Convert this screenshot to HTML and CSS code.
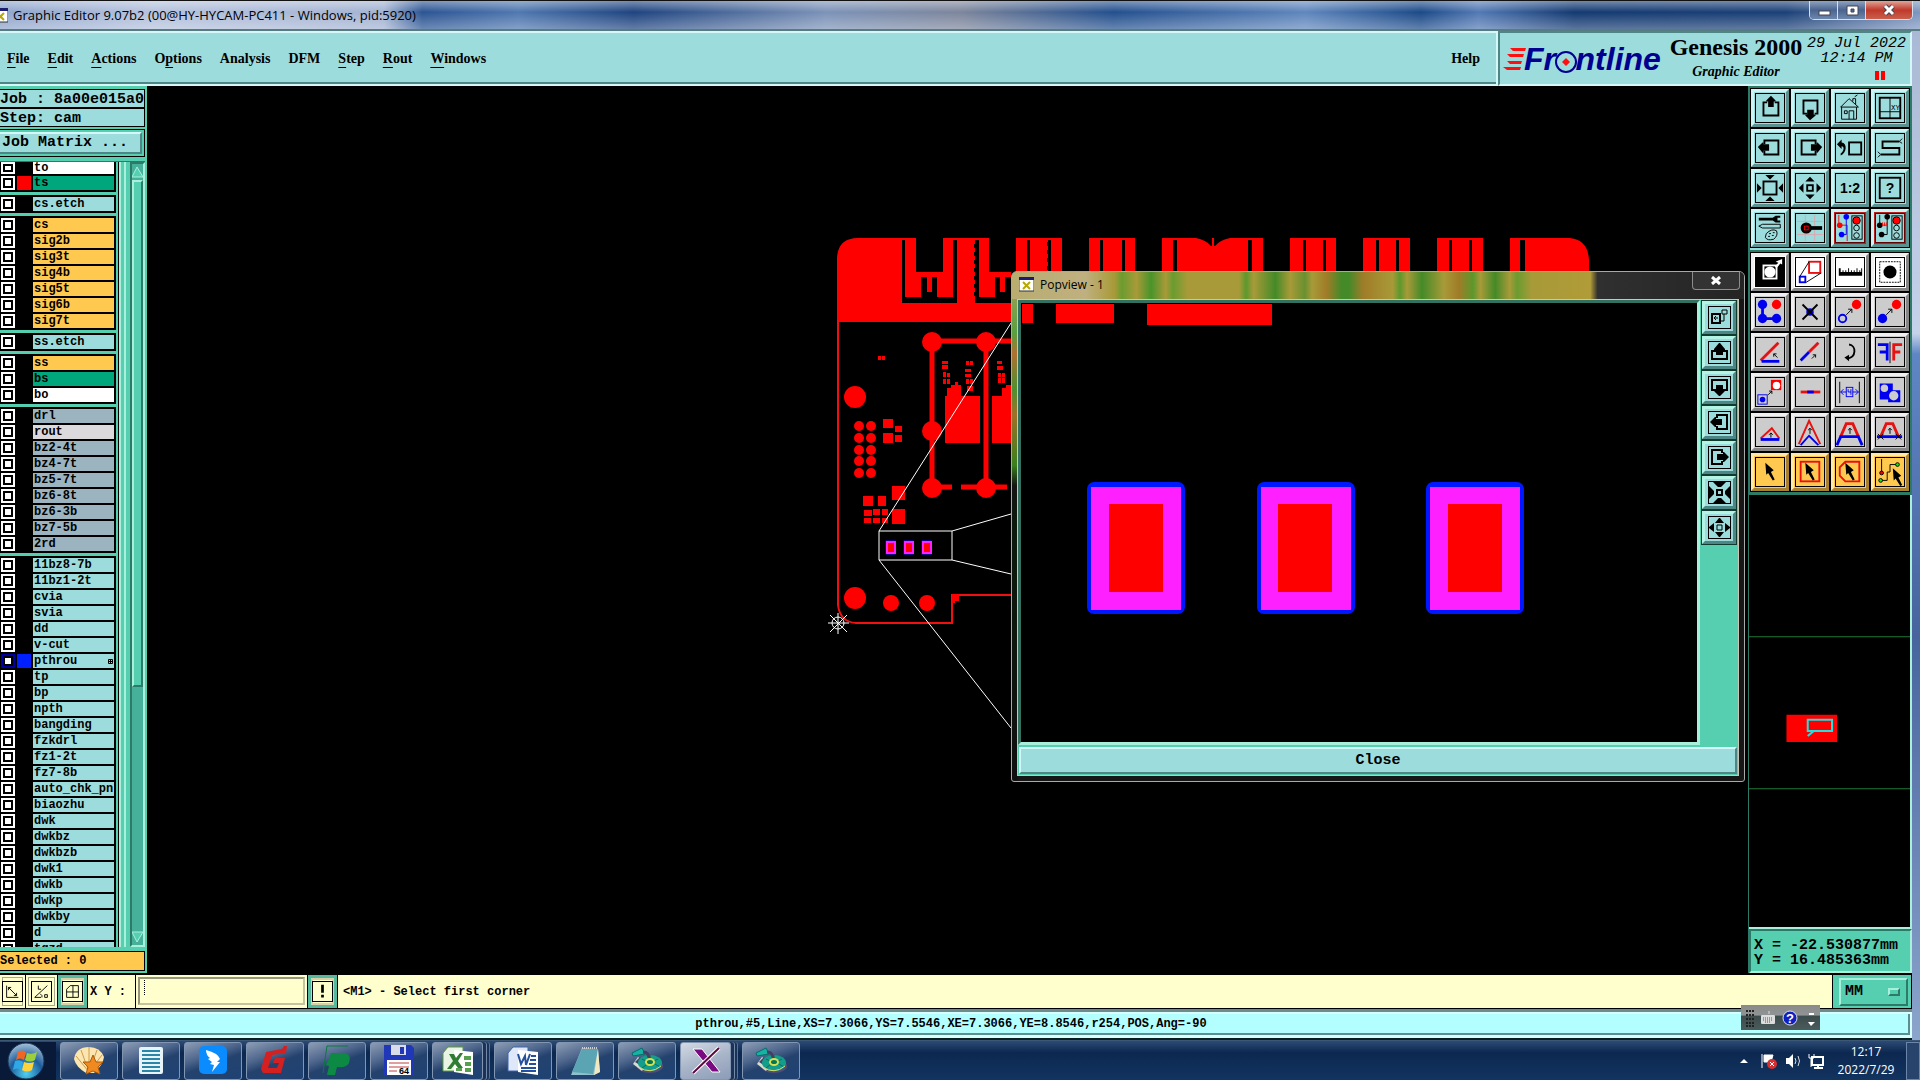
FILE: index.html
```html
<!DOCTYPE html>
<html lang="en">
  <head>
    <meta charset="UTF-8" />
    <meta name="viewport" content="width=device-width, initial-scale=1.0" />
    <title>Graphic Editor 9.07b2</title>
    <link rel="stylesheet" href="styles.css">
  </head>
  <body>
    <!-- shared icons -->
    <svg class="defs">
      <symbol id="up" viewBox="0 0 30 30"><path class="k2" d="M12 9H8V23H24V9H20"/><path class="kf" d="M16 2L21 7V8H19V14H13V8H11V7Z"/></symbol>
      <symbol id="down" viewBox="0 0 30 30"><path class="k2" d="M12 21H8V7H23V21H20"/><path class="kf" d="M15 28L10 23V22H12V17H19V22H21V23Z"/></symbol>
      <symbol id="left" viewBox="0 0 30 30"><path class="k2" d="M9 11V7H24V22H9V18"/><path class="kf" d="M2 14L7 9H8V11H14V18H8V20H7Z"/></symbol>
      <symbol id="right" viewBox="0 0 30 30"><path class="k2" d="M21 11V7H6V22H21V18"/><path class="kf" d="M28 14L23 9H22V11H16V18H22V20H23Z"/></symbol>
      <symbol id="zoomin" viewBox="0 0 30 30"><rect class="k2" x="8" y="8" width="14" height="14"/><path class="kf" d="M10 1H20L15 6ZM10 29H20L15 24ZM1 10V20L6 15ZM29 10V20L24 15Z"/></symbol>
      <symbol id="zoomout" viewBox="0 0 30 30"><rect class="k2" x="12" y="12" width="6" height="6"/><path class="kf" d="M10 8H20L15 3ZM10 22H20L15 27ZM8 10V20L3 15ZM22 10V20L27 15Z"/></symbol>
      <symbol id="cursor" viewBox="0 0 30 30"><path class="kf" d="M10 5L19 13L16 15L20 23L18 24L13 16L11 18Z"/></symbol>
      <symbol id="light" viewBox="0 0 30 30"><rect class="k" x="17" y="2" width="11" height="25"/><circle class="rf k" cx="22" cy="7" r="4"/><circle class="k" cx="22" cy="15" r="3"/><circle class="k" cx="22" cy="23" r="3"/></symbol>
      <symbol id="xwin" viewBox="0 0 15 15"><rect x="0" y="1" width="15" height="13" fill="#fff" stroke="#333"/><rect x="0" y="0" width="15" height="3" fill="#1d1d70"/><path d="M4 5L11 12M11 5L4 12" stroke="#b8a800" stroke-width="2"/></symbol>
      <symbol id="disc" viewBox="0 0 34 28"><ellipse cx="20" cy="19" rx="13" ry="7" fill="#554c78"/><path d="M3 17L8 10L17 16L12 24Z" fill="#d8dcd0"/><path d="M5 15L10 10L18 16L13 20Z" fill="#3f4262"/><ellipse cx="20" cy="16" rx="12" ry="8" fill="#159d8c"/><path d="M20 8V12M12 12L16 14M28 12L24 14M30 20L25 17M12 21L16 18" stroke="#0b6a68"/><path d="M2 6L12 1L15 7L3 9Z" fill="#14b3a4" stroke="#0b6a68"/><path d="M13 5C19 5 18 9 20 13" fill="none" stroke="#3f4262" stroke-width="3"/><ellipse cx="20" cy="15" rx="5" ry="4" fill="#d8e050"/><ellipse cx="20" cy="15" rx="3" ry="2" fill="#075"/><path d="M9 20Q20 28 31 19" fill="none" stroke="#dce064"/></symbol>
    </svg>

    <header class="titlebar">
      <svg class="appicon"><use href="#xwin"/></svg>
      <span class="title">Graphic Editor 9.07b2 (00@HY-HYCAM-PC411 - Windows, pid:5920)</span>
      <div class="winbuttons">
        <button aria-label="Minimize"><svg viewBox="0 0 28 18"><rect x="9" y="10" width="11" height="4" fill="#fff" stroke="#445"/></svg></button>
        <button aria-label="Restore"><svg viewBox="0 0 28 18"><path d="M9 5H20V14H9ZM13 8H16V11H13Z" fill="#fff" fill-rule="evenodd" stroke="#445"/></svg></button>
        <button class="quit" aria-label="Close"><svg viewBox="0 0 28 18"><path d="M10 5L18 13M18 5L10 13" stroke="#445" stroke-width="5"/><path d="M10 5L18 13M18 5L10 13" stroke="#fff" stroke-width="3"/></svg></button>
      </div>
    </header>

    <div class="app">
      <div class="top">
        <nav class="menu">
          <a href="#"><u>F</u>ile</a>
          <a href="#"><u>E</u>dit</a>
          <a href="#"><u>A</u>ctions</a>
          <a href="#">O<u>p</u>tions</a>
          <a href="#">Analysis</a>
          <a href="#">DFM</a>
          <a href="#"><u>S</u>tep</a>
          <a href="#"><u>R</u>out</a>
          <a href="#"><u>W</u>indows</a>
          <a href="#" class="help">Help</a>
        </nav>
        <div class="brand">
          <svg class="logo" viewBox="0 0 162 34">
            <path d="M7 4H23L22 7H10ZM4 10H21L20 13H7ZM4 17H19L18 20H7ZM0 23H18L17 26H4Z" fill="#ff1010"/>
            <text x="21" y="26">Frontline</text>
            <circle cx="63" cy="18" r="10" class="eye"/>
            <path d="M63 14L67 18L63 22L59 18Z" fill="#ff1010"/>
          </svg>
          <div class="product">
            <h1>Genesis 2000</h1>
            <p>Graphic Editor</p>
          </div>
          <div class="clock">
            <p>29 Jul 2022</p>
            <p>12:14 PM</p>
            <div class="pause"><i></i><i></i></div>
          </div>
        </div>
      </div>

      <main class="main">
        <aside class="side">
          <div class="info">Job : 8a00e015a0</div>
          <div class="info">Step: cam</div>
          <div class="matrixbox"><button class="matrix">Job Matrix ...</button></div>
          <div class="scroller">
            <div class="layers">
              <div class="group">
                <label class="layer white cut"><input type="checkbox"><i></i><span>to</span></label>
                <label class="layer green"><input type="checkbox"><i class="red"></i><span>ts</span></label>
              </div>
              <div class="group">
                <label class="layer"><input type="checkbox"><i></i><span>cs.etch</span></label>
              </div>
              <div class="group">
                <label class="layer sig"><input type="checkbox"><i></i><span>cs</span></label>
                <label class="layer sig"><input type="checkbox"><i></i><span>sig2b</span></label>
                <label class="layer sig"><input type="checkbox"><i></i><span>sig3t</span></label>
                <label class="layer sig"><input type="checkbox"><i></i><span>sig4b</span></label>
                <label class="layer sig"><input type="checkbox"><i></i><span>sig5t</span></label>
                <label class="layer sig"><input type="checkbox"><i></i><span>sig6b</span></label>
                <label class="layer sig"><input type="checkbox"><i></i><span>sig7t</span></label>
              </div>
              <div class="group">
                <label class="layer"><input type="checkbox"><i></i><span>ss.etch</span></label>
              </div>
              <div class="group">
                <label class="layer sig"><input type="checkbox"><i></i><span>ss</span></label>
                <label class="layer green"><input type="checkbox"><i></i><span>bs</span></label>
                <label class="layer white"><input type="checkbox"><i></i><span>bo</span></label>
              </div>
              <div class="group">
                <label class="layer drill"><input type="checkbox"><i></i><span>drl</span></label>
                <label class="layer rout"><input type="checkbox"><i></i><span>rout</span></label>
                <label class="layer drill"><input type="checkbox"><i></i><span>bz2-4t</span></label>
                <label class="layer drill"><input type="checkbox"><i></i><span>bz4-7t</span></label>
                <label class="layer drill"><input type="checkbox"><i></i><span>bz5-7t</span></label>
                <label class="layer drill"><input type="checkbox"><i></i><span>bz6-8t</span></label>
                <label class="layer drill"><input type="checkbox"><i></i><span>bz6-3b</span></label>
                <label class="layer drill"><input type="checkbox"><i></i><span>bz7-5b</span></label>
                <label class="layer drill"><input type="checkbox"><i></i><span>2rd</span></label>
              </div>
              <div class="group">
                <label class="layer"><input type="checkbox"><i></i><span>11bz8-7b</span></label>
                <label class="layer"><input type="checkbox"><i></i><span>11bz1-2t</span></label>
                <label class="layer"><input type="checkbox"><i></i><span>cvia</span></label>
                <label class="layer"><input type="checkbox"><i></i><span>svia</span></label>
                <label class="layer"><input type="checkbox"><i></i><span>dd</span></label>
                <label class="layer"><input type="checkbox"><i></i><span>v-cut</span></label>
                <label class="layer work"><input type="checkbox"><i class="blue"></i><span>pthrou<svg viewBox="0 0 5 5"><path class="k" d="M.5 .5H4.5V4.5H.5ZM2.5 0V5M0 2.5H5"/></svg></span></label>
                <label class="layer"><input type="checkbox"><i></i><span>tp</span></label>
                <label class="layer"><input type="checkbox"><i></i><span>bp</span></label>
                <label class="layer"><input type="checkbox"><i></i><span>npth</span></label>
                <label class="layer"><input type="checkbox"><i></i><span>bangding</span></label>
                <label class="layer"><input type="checkbox"><i></i><span>fzkdrl</span></label>
                <label class="layer"><input type="checkbox"><i></i><span>fz1-2t</span></label>
                <label class="layer"><input type="checkbox"><i></i><span>fz7-8b</span></label>
                <label class="layer"><input type="checkbox"><i></i><span>auto_chk_pnl</span></label>
                <label class="layer"><input type="checkbox"><i></i><span>biaozhu</span></label>
                <label class="layer"><input type="checkbox"><i></i><span>dwk</span></label>
                <label class="layer"><input type="checkbox"><i></i><span>dwkbz</span></label>
                <label class="layer"><input type="checkbox"><i></i><span>dwkbzb</span></label>
                <label class="layer"><input type="checkbox"><i></i><span>dwk1</span></label>
                <label class="layer"><input type="checkbox"><i></i><span>dwkb</span></label>
                <label class="layer"><input type="checkbox"><i></i><span>dwkp</span></label>
                <label class="layer"><input type="checkbox"><i></i><span>dwkby</span></label>
                <label class="layer"><input type="checkbox"><i></i><span>d</span></label>
                <label class="layer"><input type="checkbox"><i></i><span>tgzd</span></label>
              </div>
            </div>
            <div class="ridge"></div>
            <div class="scrollbar">
              <svg viewBox="0 0 11 12"><path d="M0 11L5 1L11 11Z" fill="#56cfb0" stroke="#a8f0dc"/></svg>
              <div class="thumb"></div>
              <div class="trough"></div>
              <svg viewBox="0 0 11 12"><path d="M0 1L5 11L11 1Z" fill="#56cfb0" stroke="#a8f0dc"/></svg>
            </div>
          </div>
          <div class="selected">Selected : 0</div>
        </aside>

        <section class="canvas">
          <svg class="board" viewBox="147 86 1601 887" preserveAspectRatio="xMinYMin slice">
            <!-- board edge and connector fingers -->
            <path class="cu" d="M837 322V258Q838 238 858 238H1011V322ZM1016 238H1062V280H1016ZM1089 238H1135V280H1089ZM1162 238H1196Q1206 240 1211 246H1215Q1220 240 1230 238H1263V280H1162ZM1290 238H1336V280H1290ZM1363 238H1410V280H1363ZM1437 238H1483V280H1437ZM1510 238H1570Q1588 240 1589 260V280H1510Z"/>
            <path class="cu" d="M1212 238H1214V250H1212Z"/>
            <path d="M902 240H905V297H921V276H937V297H953V240H957V303H902ZM916 238H943V272H939V276H920V272H916ZM975 240H979V297H995V276H1011V303H975ZM989 238H1016V276H993V272H989ZM1027 240H1030V280H1027ZM1048 240H1051V280H1048ZM1100 240H1103V280H1100ZM1122 240H1125V280H1122ZM1173 240H1177V280H1173ZM1248 240H1252V280H1248ZM1303 240H1306V280H1303ZM1323 240H1326V280H1323ZM1376 240H1379V280H1376ZM1396 240H1399V280H1396ZM1449 240H1452V280H1449ZM1469 240H1472V280H1469ZM1520 240H1525V280H1520Z"/>
            <path class="cu" d="M920 272H939V277H920ZM927 276H932V292H927ZM993 272H1011V277H993ZM1000 276H1005V292H1000Z"/>
            <path d="M1048 242V280M1123 242V280M1176 242V280M1305 242V280M1378 242V280M1451 242V280M975 244V298" stroke="#000" stroke-width="2" stroke-dasharray="4 4"/>
            <path d="M838 320V605Q840 622 856 623H952V595H1011" fill="none" stroke="#f01010" stroke-width="2"/>
            <path class="cu" d="M952 594H959V601H955V603H952Z"/>
            <!-- rails -->
            <path d="M932 341V488M986 341V488M932 341H1011M932 487H952M961 487H1007" fill="none" stroke="#f00" stroke-width="5"/>
            <g class="cu">
              <circle cx="932" cy="342" r="10"/><circle cx="986" cy="342" r="10"/><circle cx="932" cy="431" r="10"/>
              <circle cx="932" cy="488" r="10"/><circle cx="986" cy="488" r="10"/>
              <circle cx="855" cy="397" r="11"/><circle cx="855" cy="598" r="11"/><circle cx="891" cy="603" r="8"/><circle cx="927" cy="603" r="8"/>
              <circle cx="859" cy="426" r="5"/><circle cx="871" cy="426" r="5"/><circle cx="859" cy="438" r="5"/><circle cx="871" cy="438" r="5"/>
              <circle cx="859" cy="450" r="5"/><circle cx="871" cy="450" r="5"/><circle cx="859" cy="461" r="5"/><circle cx="871" cy="461" r="5"/>
              <circle cx="859" cy="473" r="5"/><circle cx="871" cy="473" r="5"/>
              <path d="M878 356H881V360H878ZM882 356H885V360H882ZM883 419H893V428H883ZM883 433H893V443H883ZM895 426H902V432H895ZM895 435H902V442H895ZM892 486H905V500H892ZM892 509H905V524H892ZM863 496H873V506H863ZM878 496H886V506H878ZM864 510H872V516H864ZM873 509H880V515H873ZM882 509H888V515H882ZM864 518H871V523H864ZM873 518H880V523H873ZM882 518H888V523H882Z"/>
              <path d="M942 361H948V364H942ZM942 365H948V369H942ZM943 372H946V377H943ZM947 373H950V377H947ZM943 379H946V384H943ZM947 379H950V384H947ZM966 361H969V365H966ZM970 361H973V365H970ZM965 369H971V372H965ZM965 374H971V377H965ZM966 379H969V384H966ZM970 379H973V384H970ZM967 386H973V391H967ZM997 361H1002V364H997ZM997 366H1003V370H997ZM998 373H1001V377H998ZM1002 373H1005V377H1002ZM998 378H1001V383H998ZM1002 378H1005V383H1002Z"/>
              <path d="M945 443V396H947V388H951V385H955V382H958V385H961V396H980V443ZM992 443V396H1002V388H1006V385H1011V443Z"/>
            </g>
            <!-- zoomed area and its leader lines -->
            <rect x="879" y="531" width="73" height="29" fill="#000"/>
            <g stroke="#20f" fill="#f00">
              <rect x="886" y="541" width="9" height="13"/><rect x="904" y="541" width="9" height="13"/><rect x="922" y="541" width="9" height="13"/>
            </g>
            <g stroke="#f2f" stroke-width="2" fill="#f00">
              <rect x="887" y="542" width="8" height="11"/><rect x="905" y="542" width="8" height="11"/><rect x="923" y="542" width="8" height="11"/>
            </g>
            <path class="w" d="M879 531H952V560H879ZM879 531L1011 323M952 531L1011 514M952 560L1011 574M879 560L1011 728"/>
            <g class="w"><circle cx="838" cy="623" r="6"/><path d="M828 623H849M838 613V634M830 615L847 632M847 615L830 632"/></g>
          </svg>

          <div class="popview">
            <div class="poptitle">
              <svg class="appicon"><use href="#xwin"/></svg>
              <span>Popview - 1</span>
              <button aria-label="Close popview"><svg viewBox="0 0 10 9"><path d="M1 1L9 8M9 1L1 8" stroke="#fff" stroke-width="3"/></svg></button>
            </div>
            <div class="popbody">
              <div class="poprow">
                <svg class="view" viewBox="1021 303 677 439" preserveAspectRatio="xMinYMin slice">
                  <path class="cu" d="M1022 304H1033V323H1022ZM1056 304H1114V323H1056ZM1147 304H1272V325H1147Z"/>
                  <g fill="#0018ff"><rect x="1087" y="482" width="98" height="132" rx="7"/><rect x="1257" y="482" width="98" height="132" rx="7"/><rect x="1426" y="482" width="98" height="132" rx="7"/></g>
                  <g fill="#ff20ff"><rect x="1091" y="487" width="90" height="123"/><rect x="1261" y="487" width="90" height="123"/><rect x="1430" y="487" width="90" height="123"/></g>
                  <g class="cu"><rect x="1109" y="504" width="54" height="88"/><rect x="1278" y="504" width="54" height="88"/><rect x="1448" y="504" width="54" height="88"/></g>
                </svg>
                <div class="poptools">
                  <button aria-label="Detach"><svg viewBox="0 0 21 21"><path class="k2" d="M3 7H11V16H3Z"/><path class="k" d="M12 14H15V7M13 3H18V7H13ZM9 11H5M7 9L5 11L7 13"/></svg></button>
                  <button aria-label="Pan up"><svg viewBox="0 0 21 21"><path class="k2" d="M7 9H3V17H18V9H14"/><path class="kf" d="M10 1H11L16 7V8H14V13H7V8H5V7Z"/></svg></button>
                  <button aria-label="Pan down"><svg viewBox="0 0 21 21"><path class="k2" d="M7 13H3V3H18V13H14"/><path class="kf" d="M10 19H11L16 14V13H14V8H7V13H5V14Z"/></svg></button>
                  <button aria-label="Pan left"><svg viewBox="0 0 21 21"><path class="k2" d="M8 6V3H18V17H8V14"/><path class="kf" d="M1 10L6 5H7V7H13V13H7V15H6Z"/></svg></button>
                  <button aria-label="Pan right"><svg viewBox="0 0 21 21"><path class="k2" d="M13 6V3H3V17H13V14"/><path class="kf" d="M20 10L15 5H14V7H8V13H14V15H15Z"/></svg></button>
                  <button aria-label="Zoom in"><svg viewBox="0 0 21 21"><path class="k2" d="M8 8H13V13H8Z"/><path class="kf" d="M4 0H17L12 5H9ZM4 21H17L12 16H9ZM0 4V17L5 12V9ZM21 4V17L16 12V9Z"/></svg></button>
                  <button aria-label="Zoom out"><svg viewBox="0 0 21 21"><path class="k" d="M8 8H13V13H8Z"/><path class="kf" d="M6 6H15L11 1H10ZM6 15H15L11 20H10ZM5 6V15L0 11V10ZM16 6V15L21 11V10Z"/></svg></button>
                </div>
              </div>
              <div class="closebar"><button>Close</button></div>
            </div>
          </div>
        </section>

        <aside class="tools">
          <div class="grid teal">
            <button aria-label="Up"><svg><use href="#up"/></svg></button>
            <button aria-label="Down"><svg><use href="#down"/></svg></button>
            <button aria-label="Home"><svg viewBox="0 0 30 30"><path class="k" d="M5 14L14 5L24 14ZM6 14V27H22V14M14 27V18H19V27M9 18H12V21H9ZM18 8V5H21V11M20 3L23 1"/></svg></button>
            <button aria-label="Coordinates"><svg viewBox="0 0 30 30"><rect class="k2" x="4" y="4" width="22" height="22"/><path class="k" d="M15 4V26M4 19H26"/><text class="tiny" x="16" y="17">XY</text></svg></button>

            <button aria-label="Left"><svg><use href="#left"/></svg></button>
            <button aria-label="Right"><svg><use href="#right"/></svg></button>
            <button aria-label="Previous"><svg viewBox="0 0 30 30"><rect class="k2" x="14" y="9" width="13" height="13"/><path class="kf" d="M1 11L6 6V9C12 9 12 20 5 23V21C9 18 9 13 6 13V16Z"/></svg></button>
            <button aria-label="Serpentine"><svg viewBox="0 0 30 30"><path class="k2" d="M25 8H7V15H25V22H5"/><path class="k" d="M28 5L25 8L28 10M2 19L5 22L2 25"/></svg></button>

            <button aria-label="Zoom in"><svg><use href="#zoomin"/></svg></button>
            <button aria-label="Zoom out"><svg><use href="#zoomout"/></svg></button>
            <button aria-label="Scale"><svg viewBox="0 0 30 30"><text class="lbl" x="15" y="20">1:2</text></svg></button>
            <button aria-label="Help"><svg viewBox="0 0 30 30"><rect class="k2" x="4" y="4" width="22" height="22"/><text class="lbl" x="15" y="20">?</text></svg></button>

            <button aria-label="Setup"><svg viewBox="0 0 30 30"><path class="kf" d="M3 4H18L21 2H26V4H23V7H26V9H21L18 7H3Z"/><path class="k" d="M3 13L7 11H26V15H7ZM11 21Q17 15 22 18Q24 23 19 27Q12 29 10 25ZM14 21H16M18 20H20M13 24H15M17 23H19"/></svg></button>
            <button aria-label="Snap"><svg viewBox="0 0 30 30"><path d="M10 1V29M20 1V29M1 8H29M1 22H29" stroke="#d8a8b0"/><circle class="kf" cx="11" cy="15" r="6"/><path class="kf" d="M15 13H28V17H15Z"/><rect x="9" y="13" width="4" height="4" fill="#000" stroke="#f00"/></svg></button>
            <button class="stop" aria-label="Net check"><svg viewBox="0 0 30 30"><path d="M3 1V12H12V29" fill="none" stroke="#f00"/><path d="M11 3V22H5" fill="none" stroke="#00f"/><circle cx="11" cy="3" r="3" fill="#00f"/><circle class="rf" cx="4" cy="12" r="3"/><circle cx="6" cy="22" r="3" fill="#00f"/><use href="#light"/></svg></button>
            <button class="stop" aria-label="Space check"><svg viewBox="0 0 30 30"><path class="k" d="M4 1V12M12 3V22H6"/><circle class="kf" cx="12" cy="3" r="3"/><circle class="kf" cx="4" cy="12" r="3"/><circle class="kf" cx="6" cy="22" r="3"/><path d="M7 9V13M9 9V13M11 9V13M7 12H11" stroke="#f00"/><use href="#light"/></svg></button>
          </div>

          <div class="grid gray">
            <button class="lit" aria-label="Select"><svg viewBox="0 0 30 30"><path class="kf" d="M0 0H30V30H0Z"/><rect x="8" y="8" width="14" height="14" fill="#000" stroke="#fff" stroke-width="2"/><circle cx="15" cy="15" r="6" fill="#fff"/><path d="M20 9L24 5L21 4L28 1L28 7L26 6L22 11Z" fill="#fff"/></svg></button>
            <button class="lit" aria-label="Resize"><svg viewBox="0 0 30 30"><rect class="r2" x="14" y="4" width="12" height="12"/><rect class="b2" x="4" y="20" width="6" height="6"/><path class="k" d="M4 20L14 4M11 26L27 16"/></svg></button>
            <button class="lit" aria-label="Measure"><svg viewBox="0 0 30 30"><path class="kf" d="M3 11H5V15H7V13H8V15H10V13H11V15H13V11H14V15H16V13H17V15H19V13H20V15H22V11H23V15H25V13H26V15H27V11H28V19H3Z"/></svg></button>
            <button class="lit" aria-label="Feature"><svg viewBox="0 0 30 30"><rect class="k" x="4" y="4" width="22" height="22" stroke-dasharray="2 1"/><circle class="kf" cx="15" cy="15" r="7"/></svg></button>

            <button aria-label="Chain"><svg viewBox="0 0 30 30"><path class="b3" d="M7 7V22H22"/><circle class="bf" cx="7" cy="7" r="5"/><circle class="bf" cx="7" cy="22" r="5"/><circle class="bf" cx="22" cy="22" r="5"/><circle class="rf" cx="22" cy="7" r="5"/></svg></button>
            <button aria-label="Delete"><svg viewBox="0 0 30 30"><circle class="bf" cx="15" cy="15" r="4"/><path class="k2" d="M7 7L23 23M23 7L7 23"/></svg></button>
            <button aria-label="Move copy"><svg viewBox="0 0 30 30"><circle class="b2" cx="7" cy="22" r="4"/><circle class="rf" cx="22" cy="7" r="5"/><path class="k" d="M11 18L17 12M13 12H17V16"/></svg></button>
            <button aria-label="Move"><svg viewBox="0 0 30 30"><circle class="bf" cx="7" cy="22" r="5"/><circle class="rf" cx="22" cy="7" r="5"/><path class="k" d="M11 18L17 12M13 12H17V16"/></svg></button>

            <button aria-label="Rotate line"><svg viewBox="0 0 30 30"><path class="r3" d="M5 24L24 5"/><path class="b3" d="M6 25H25"/><path class="k" d="M19 17L23 21M19 20V17H22"/></svg></button>
            <button aria-label="Stretch line"><svg viewBox="0 0 30 30"><path class="r3" d="M14 15L24 5"/><path class="b3" d="M5 24L14 15"/><path class="k" d="M17 22L21 18M18 18H21V21"/></svg></button>
            <button aria-label="Rotate"><svg viewBox="0 0 30 30"><path class="k2" d="M14 7C22 8 22 21 12 22"/><path class="kf" d="M9 21L14 18V25Z"/></svg></button>
            <button aria-label="Mirror"><svg viewBox="0 0 30 30"><path class="b3" d="M2 7H12V24M4 15H12"/><path class="r3" d="M28 7H19V24M26 15H19"/><path class="k" d="M15 4V27"/></svg></button>

            <button aria-label="Change symbol"><svg viewBox="0 0 30 30"><rect class="b1" x="2" y="18" width="10" height="10"/><circle class="bf" cx="7" cy="23" r="3"/><path class="rf" d="M16 2H27V13H16Z"/><circle cx="22" cy="8" r="4" fill="#fff"/><path class="k" d="M13 18L17 14M14 14H17V17"/></svg></button>
            <button aria-label="Break line"><svg viewBox="0 0 30 30"><path class="r3" d="M5 15H26"/><path class="b3" d="M12 15H19"/></svg></button>
            <button aria-label="Spacing"><svg viewBox="0 0 30 30"><path class="k" d="M4 4V27M25 4V27"/><rect class="b1" x="11" y="10" width="7" height="10"/><path class="b1" d="M5 15H11M18 15H24M8 12L5 15L8 18M21 12L24 15L21 18M13 12V15H16M16 12V18"/></svg></button>
            <button aria-label="Merge"><svg viewBox="0 0 30 30"><path class="bf" d="M4 6H18V13H26V26H13V23H4Z"/><circle cx="9" cy="11" r="4" fill="#ccc"/><circle cx="19" cy="19" r="5" fill="#ccc"/></svg></button>

            <button aria-label="Bend"><svg viewBox="0 0 30 30"><path class="r2" d="M5 22L17 11L25 22"/><path class="b3" d="M5 23H25"/><path class="k" d="M16 21V16M14 18L16 16L18 18"/></svg></button>
            <button aria-label="Peak"><svg viewBox="0 0 30 30"><path class="r2" d="M3 28L14 3L26 28"/><path class="b2" d="M5 29L14 19L24 29"/><path class="k" d="M15 17V11M13 13L15 11L17 13"/></svg></button>
            <button aria-label="Trapezoid"><svg viewBox="0 0 30 30"><path class="r3" d="M5 20L11 6H18L24 20"/><path class="b3" d="M1 29L5 20H24L28 29"/><path class="k" d="M15 17V11M13 13L15 11L17 13"/></svg></button>
            <button aria-label="Trim"><svg viewBox="0 0 30 30"><path class="r3" d="M5 20L11 6H18L24 20"/><path class="b3" d="M1 20H28"/><path class="k" d="M15 17V11M13 13L15 11L17 13M2 17L8 23M8 17L2 23M21 17L27 23M27 17L21 23"/></svg></button>

            <button class="pick" aria-label="Pick"><svg><use href="#cursor"/></svg></button>
            <button class="pick" aria-label="Pick in frame"><svg viewBox="0 0 30 30"><rect class="r2" x="5" y="4" width="20" height="21"/><use href="#cursor"/></svg></button>
            <button class="pick" aria-label="Pick in polygon"><svg viewBox="0 0 30 30"><path class="r2" d="M10 4H25V25H10L4 19V10Z"/><use href="#cursor"/></svg></button>
            <button class="pick" aria-label="Pick net"><svg viewBox="0 0 30 30"><path class="k" d="M6 1V16M5 24H12V15H15V7H23"/><circle class="rf k" cx="6" cy="16" r="2"/><circle class="gf k" cx="5" cy="24" r="2"/><circle class="gf k" cx="23" cy="7" r="2"/><use href="#cursor" x="8" y="6"/></svg></button>
          </div>

          <div class="overview">
            <svg viewBox="1751 495 159 433" preserveAspectRatio="xMinYMin slice">
              <path d="M1751 635H1910M1751 785H1910" stroke="#1f7a3a"/>
              <path class="cu" d="M1788 712H1838V739H1788Z"/>
              <path d="M1809 717H1833V728H1809ZM1815 728L1809 733" fill="none" stroke="#20e0e0" stroke-width="2"/>
            </svg>
          </div>
          <div class="coords">
            <p>X = -22.530877mm</p>
            <p>Y = 16.485363mm</p>
          </div>
        </aside>
      </main>

      <div class="command">
        <button class="flat" aria-label="Scale mode"><svg viewBox="0 0 21 21"><path class="k" d="M4 4V17H17M6 6L15 15M6 9V6H9M15 12V15H12"/></svg></button>
        <button class="flat" aria-label="Angle mode"><svg viewBox="0 0 21 21"><path class="k" d="M3 17H10M3 17L17 4M7 4V8H10M9 13Q12 15 11 17M14 14H17V17H14Z"/></svg></button>
        <button class="snap" aria-label="Grid"><svg viewBox="0 0 21 21"><path class="k" d="M4 8L8 4H17V17H4ZM11 4V17M4 11H17"/></svg></button>
        <label for="xy">X Y :</label>
        <div class="entry"><input type="text" id="xy"></div>
        <button class="snap" aria-label="Apply"><svg viewBox="0 0 21 21"><path class="kf" d="M9 3H12V12H9ZM9 14H12V17H9Z"/></svg></button>
        <p class="message">&lt;M1&gt; - Select first corner</p>
        <div class="units">
          <select aria-label="Units"><option>MM</option></select>
          <i></i>
        </div>
      </div>

      <footer class="status"><p>pthrou,#5,Line,XS=7.3066,YS=7.5546,XE=7.3066,YE=8.8546,r254,POS,Ang=-90</p></footer>
    </div>

    <div class="langbar">
      <svg viewBox="0 0 79 26">
        <path d="M5 6H13M5 10H13M5 14H13M5 18H13M5 21H13" stroke="#222" stroke-width="2" stroke-dasharray="2 1"/>
        <path d="M28 9V6" stroke="#ddd"/><rect x="20" y="10" width="14" height="9" rx="1" fill="#ddd"/>
        <path d="M22 13H32M22 15H32M24 17H30" stroke="#555" stroke-dasharray="1 1"/>
        <circle cx="49" cy="13" r="7" fill="#1020c0" stroke="#dde"/>
        <text x="49" y="18">?</text>
        <path d="M68 8H73V10H68ZM67 17H74L70 21Z" fill="#fff"/>
      </svg>
    </div>

    <div class="taskbar">
      <button class="start" aria-label="Start">
        <svg viewBox="0 0 38 38">
          <defs><radialGradient id="orb" cx=".5" cy=".85" r=".9"><stop offset="0" stop-color="#4fd0f0"/><stop offset=".5" stop-color="#1d5c9c"/><stop offset="1" stop-color="#b8cfe0"/></radialGradient></defs>
          <circle cx="19" cy="19" r="18" fill="url(#orb)" stroke="#16324f"/>
          <path d="M11 10Q15 7 19 10L17 18Q13 15 9 18Z" fill="#f26522"/><path d="M20 11Q25 13 30 10L28 18Q23 21 18 18Z" fill="#9bd03c"/>
          <path d="M8 19Q12 17 16 20L14 28Q10 25 6 28Z" fill="#2fa8e8"/><path d="M17 20Q22 22 27 20L25 28Q20 31 15 28Z" fill="#ffd23c"/>
        </svg>
      </button>
      <button class="task" aria-label="Shell"><svg viewBox="0 0 34 32"><path d="M17 2Q4 2 2 14Q4 22 14 28H22Q31 20 32 12Q28 2 17 2Z" fill="#fbe5b0"/><path d="M17 27L4 11M17 27L9 5M17 27L17 2M17 27L25 5M17 27L30 10" stroke="#d09a4a"/><path d="M21 10L24 17L31 17L26 22L28 29L21 26L14 29L16 22L11 17L18 17Z" fill="#f08a20" stroke="#a85a10"/></svg></button>
      <button class="task" aria-label="Notes"><svg viewBox="0 0 34 32"><rect x="5" y="2" width="24" height="27" rx="2" fill="#e6f4f8"/><path d="M8 6H26M8 10H26M8 14H26M8 18H26M8 22H26M8 26H26" stroke="#2a86a8" stroke-width="2"/></svg></button>
      <button class="task" aria-label="Messenger"><svg viewBox="0 0 34 32"><rect x="3" y="1" width="28" height="28" rx="5" fill="#0a8cff"/><path d="M10 5Q22 8 24 14L21 17H24L16 27L18 20L14 19L16 17L12 14L14 13Q10 10 10 5Z" fill="#fff"/></svg></button>
      <button class="task" aria-label="Genesis"><svg viewBox="0 0 34 32"><path d="M29 1L28 8L14 10L10 23H19L21 18H15L17 13H27L23 28H5L3 24L8 7L24 4L26 1Z" fill="#d42020"/></svg></button>
      <button class="task" aria-label="PCB viewer"><svg viewBox="0 0 34 32"><path d="M7 1H28M7 1L3 28" stroke="#0a7a3c" fill="none"/><path d="M11 8H24Q32 9 29 18Q27 23 17 22L15 30H7L9 21L6 20L8 16Z" fill="#0c8a44"/></svg></button>
      <button class="task" aria-label="Commander"><svg viewBox="0 0 34 32"><path d="M2 0H29L32 3V31H2Z" fill="#2038b8"/><path d="M9 0H24V10H9Z" fill="#d8dce8"/><path d="M18 2H22V9H18Z" fill="#2038b8"/><path d="M5 15H29V30H5Z" fill="#fff"/><path d="M7 18H27M7 22H27M7 26H15" stroke="#c04040"/><text class="sixty" x="17" y="29">64</text></svg></button>
      <button class="task many" aria-label="Excel"><svg viewBox="0 0 34 32"><path d="M7 2H22V26H2V8Z" fill="#e8f4e4" stroke="#5a9a3c"/><path d="M13 5L32 7V30L13 27Z" fill="#fff"/><path d="M8 9H13L15 13L19 8H22L17 16L22 23H17L14 19L10 24H6L12 16Z" fill="#2f7d32"/><path d="M23 11H30V15H23ZM24 17H30V21H24ZM24 23H30V27H24ZM15 23H21V26H15Z" fill="#58a050"/></svg></button>
      <button class="task" aria-label="Word"><svg viewBox="0 0 34 32"><path d="M7 2H22V26H2V8Z" fill="#dfe8f8" stroke="#3c64b0"/><path d="M12 5L32 7V30L12 27Z" fill="#fff"/><path d="M12 9L15 19L19 11L20 20L24 9" fill="none" stroke="#24509c" stroke-width="2"/><path d="M25 11H30M24 15H30M23 19H30M15 23H30M15 26H30" stroke="#24509c" stroke-width="2"/></svg></button>
      <button class="task" aria-label="Notepad"><svg viewBox="0 0 34 32"><path d="M14 3L30 4L32 27L26 30H3Z" fill="#8fc0cc"/><path d="M14 4L30 4L25 29L4 27Z" fill="#5aa4b4"/><path d="M30 4L32 27L26 30Z" fill="#f0e8c0"/><path d="M14 3H30" stroke="#ccc" stroke-width="2" stroke-dasharray="1 1"/></svg></button>
      <button class="task" aria-label="Genesis toolkit"><svg><use href="#disc"/></svg></button>
      <button class="task many active" aria-label="X server"><svg viewBox="0 0 34 32"><path d="M4 4H13L31 27H23Z" fill="#7a0a80" stroke="#fff"/><path d="M30 3L4 28" stroke="#fff" stroke-width="4"/><path d="M30 3L4 28" stroke="#5a0a40" stroke-width="2"/></svg></button>
      <button class="task" aria-label="Genesis script"><svg><use href="#disc"/></svg></button>

      <div class="tray">
        <svg viewBox="0 0 90 24">
          <path d="M4 14L8 10L12 14Z" fill="#fff"/>
          <path d="M26 5V19M28 6H37L35 13H28Z" stroke="#fff" fill="#fff"/><circle cx="36" cy="15" r="5" fill="#d83030"/><path d="M34 13L38 17M38 13L34 17" stroke="#fff"/>
          <path d="M50 9H53L57 5V19L53 15H50Z" fill="#fff"/><path d="M59 9Q61 12 59 15M62 7Q65 12 62 17" fill="none" stroke="#ddd"/>
          <path d="M76 8H87V16H76ZM78 19H87M82 16V19" fill="none" stroke="#fff" stroke-width="2"/><path d="M73 5V9H78V5M75 9V18" fill="none" stroke="#fff"/>
        </svg>
        <div class="time"><p>12:17</p><p>2022/7/29</p></div>
        <button class="desktop" aria-label="Show desktop"></button>
      </div>
    </div>
  </body>
</html>
```
FILE: styles.css
```css
* {
  margin: 0;
  padding: 0;
  box-sizing: border-box;
}
body {
  height: 100vh;
  display: flex;
  flex-direction: column;
  overflow: hidden;
  background: black;
  font-family: "Liberation Mono", monospace;
  font-size: 12px;
  font-weight: bold;
  color: black;
}
button {
  border: 0;
  font: inherit;
  color: inherit;
  background: none;
}
svg {
  display: block;
}
.defs {
  position: absolute;
  width: 0;
  height: 0;
}

/* drawing helpers */
.k { fill: none; stroke: black; }
.k2 { fill: none; stroke: black; stroke-width: 2; }
.kf { fill: black; }
.r2 { fill: none; stroke: #e81010; stroke-width: 2; }
.r3 { fill: none; stroke: #e81010; stroke-width: 3; }
.rf, .rf.k { fill: #f00; }
.gf.k { fill: #20e020; }
.b1 { fill: none; stroke: #0000f0; }
.b2 { fill: none; stroke: #0000f0; stroke-width: 2; }
.b3 { fill: none; stroke: #0000f0; stroke-width: 3; }
.bf { fill: #0000f0; }
.cu { fill: #f00; }
.w { fill: none; stroke: white; }
.tiny {
  font-size: 8px;
  font-weight: normal;
}
.lbl {
  font: bold 15px "Liberation Sans", sans-serif;
  text-anchor: middle;
}

/* title bar */
.titlebar {
  height: 31px;
  flex: none;
  display: flex;
  align-items: center;
  gap: 5px;
  border-top: 1px solid #111;
  border-bottom: 2px solid #557c80;
  background: linear-gradient(rgba(255,255,255,.4), rgba(255,255,255,0) 40%, rgba(255,255,255,.3)),
    linear-gradient(90deg, #8fa5cc, #b5c2dd 8%, #a3b3d2 20%, #2c5593 22%, #5078b0 27%, #1f4480 33%, #7c93b8 43%, #7d869c 50%, #24508e 58%, #6087bd 68%, #1c4a88 74%, #5379b4 77%, #143a72 82%, #1c4178 93%, #7e97c0);
  font: 13px "Open Sans", sans-serif;
}
.appicon {
  width: 15px;
  height: 15px;
}
.titlebar .appicon {
  margin-left: -7px;
}
.winbuttons {
  margin-left: auto;
  margin-right: 7px;
  align-self: flex-start;
  display: flex;
  height: 19px;
  border: 1px solid #d4deec;
  border-top: 0;
  border-radius: 0 0 5px 5px;
  overflow: hidden;
}
.winbuttons button {
  width: 28px;
  background: linear-gradient(#8fa2c0, #4a648f 50%, #6c86ac);
  border-right: 1px solid #d4deec;
}
.winbuttons svg {
  height: 18px;
  margin: auto;
}
.winbuttons .quit {
  width: 46px;
  border: 0;
  background: linear-gradient(#e0a498, #c0392b 50%, #c8604c);
}

.app {
  flex: 1;
  min-height: 0;
  display: flex;
  flex-direction: column;
  padding-right: 8px;
  background: linear-gradient(#a9b8d4, #c4d2ea 30%, #5f86c4 32%, #47649e 60%, #8ba5cc);
}
.top {
  height: 55px;
  display: flex;
  background: #9cdcdc;
}
.menu {
  flex: 1;
  display: flex;
  align-items: center;
  gap: 18px;
  padding: 2px 16px 0 7px;
  border: 2px solid;
  border-color: #d4f8f8 #4e8686 #4e8686 transparent;
  border-left: 0;
  box-shadow: 0 2px #d4f8f8;
  margin-bottom: 2px;
  font: bold 14px "Liberation Serif", serif;
}
.menu a {
  color: black;
  text-decoration: none;
}
.menu u {
  text-underline-offset: 4px;
}
.menu .help {
  margin-left: auto;
}
.brand {
  width: 414px;
  display: flex;
  gap: 3px;
  padding-left: 3px;
  border: 2px solid;
  border-color: #4e8686 #d4f8f8 #d4f8f8 #4e8686;
  box-shadow: -2px 0 #d4f8f8;
}
.logo {
  width: 162px;
  height: 34px;
  margin-top: 11px;
  overflow: visible;
}
.logo text {
  font: italic bold 32px "Liberation Sans", sans-serif;
  fill: #000090;
}
.eye {
  fill: #9cdcdc;
  stroke: #000090;
  stroke-width: 2;
}
.product {
  width: 136px;
  padding-top: 1px;
  text-align: center;
  white-space: nowrap;
  font-family: "Liberation Serif", serif;
}
.product h1 {
  font-size: 24px;
  line-height: 26px;
}
.product p {
  font-size: 14px;
  font-style: italic;
  line-height: 24px;
}
.clock {
  font-size: 15px;
  font-style: italic;
  font-weight: normal;
  line-height: 15px;
  padding-top: 3px;
  text-align: center;
}
.pause {
  display: flex;
  gap: 2px;
  justify-content: flex-end;
  padding: 5px 21px 0 0;
}
.pause i {
  width: 4px;
  height: 9px;
  background: #f00;
}

.main {
  flex: 1;
  min-height: 0;
  display: grid;
  grid-template-columns: 147px 1fr 164px;
}

/* layer list */
.side {
  min-height: 0;
  display: flex;
  flex-direction: column;
  padding: 3px 2px 2px 0;
  background: #56cfb0;
}
.info {
  height: 19px;
  border: 1px solid black;
  border-left: 0;
  background: #9cdcdc;
  font-size: 15px;
  line-height: 19px;
  white-space: pre;
}
.matrixbox {
  margin: 2px 0 4px;
  padding: 2px 2px 2px 0;
  border: 1px solid black;
  border-left: 0;
}
.matrix {
  width: 100%;
  height: 22px;
  padding-left: 2px;
  border: 2px solid;
  border-color: #d4f8f8 #4e8686 #4e8686 transparent;
  border-left: 0;
  background: #9cdcdc;
  font-size: 15px;
  line-height: 18px;
  text-align: left;
}
.scroller {
  flex: 1;
  min-height: 0;
  display: flex;
  border-top: 1px solid #2c7a68;
}
.layers {
  width: 116px;
  overflow: hidden;
  display: flex;
  flex-direction: column;
  gap: 3px;
}
.group {
  flex: none;
  padding-bottom: 2px;
  background: black;
}
.layer {
  height: 16px;
  display: flex;
  gap: 2px;
  padding: 2px 2px 0 1px;
}
.layer.cut {
  height: 12px;
  padding-top: 0;
}
.layer input {
  appearance: none;
  flex: none;
  width: 14px;
  border: 2px solid white;
  background: white;
  box-shadow: inset 0 0 0 2px black;
}
.layer i {
  flex: none;
  width: 14px;
}
.layer span {
  flex: 1;
  display: flex;
  align-items: center;
  justify-content: space-between;
  overflow: hidden;
  padding: 0 1px;
  background: #9cdcdc;
  line-height: 14px;
}
.layer svg {
  width: 5px;
  height: 5px;
}
.layer.white span { background: white; }
.layer.green span { background: #00a67c; }
.layer.sig span { background: #ffc84f; }
.layer.drill span { background: #9bb4bf; }
.layer.rout span { background: #dcd9dc; }
.layer i.red { background: #f00; }
.layer i.blue { background: #0020ff; }
.layer.work input { border-color: #0000a0; }
.ridge {
  width: 14px;
  background: linear-gradient(90deg, #56cfb0 2px, black 2px 3px, #a8f0dc 3px 5px, #56cfb0 5px 8px, #a8f0dc 8px 10px, #56cfb0 10px);
}
.scrollbar {
  flex: 1;
  display: flex;
  flex-direction: column;
  align-items: center;
  border: 2px solid;
  border-color: #2c7a68 #a8f0dc #a8f0dc #2c7a68;
  background: #46b09a;
}
.scrollbar svg {
  width: 11px;
  margin: 2px 0;
}
.thumb {
  flex: 510;
  width: 100%;
  border: 2px solid;
  border-color: #a8f0dc #2c7a68 #2c7a68 #a8f0dc;
  background: #56cfb0;
}
.trough {
  flex: 245;
}
.selected {
  height: 20px;
  margin-top: 4px;
  border: 1px solid black;
  border-left: 0;
  background: #ffc84f;
  line-height: 19px;
}

/* drawing area */
.canvas {
  position: relative;
  overflow: hidden;
  background: black;
}
.board {
  width: 100%;
  height: 100%;
}
.popview {
  position: absolute;
  left: 864px;
  top: 185px;
  width: 734px;
  height: 511px;
  display: flex;
  flex-direction: column;
  padding: 0 5px 5px;
  border: 1px solid #a9a9a9;
  border-radius: 6px 6px 3px 3px;
  background: linear-gradient(90deg, transparent 6px, #161616 6px),
    linear-gradient(#b4a060, #58a040 12%, #b07030 16%, #4e9030 23%, #a07028 28%, #38801c 38%, #141414 42%, #0c1a0c 50%, #101010);
}
.poptitle {
  height: 27px;
  flex: none;
  display: flex;
  align-items: center;
  gap: 6px;
  margin: 0 -5px;
  padding: 0 4px 2px 7px;
  border-radius: 5px 5px 0 0;
  background: linear-gradient(90deg, #b8ac70, #c0b080 10%, #a89a38 14%, #6a9c30 15%, #a89a38 17%, #48942a 19%, #a89a38 21%, #6a9c30 22%, #a89a38 24%, #a89a38 31%, #5c982c 32%, #a89a38 33%, #448a28 36%, #a89a38 38%, #6a9030 40%, #a89a38 41%, #a07c28 43%, #448a28 45%, #448a28 46%, #a07c28 48%, #a89a38 52%, #5c982c 53%, #a89a38 54%, #448a28 56%, #a89a38 59%, #a07c28 61%, #5c982c 63%, #a89a38 64%, #448a28 66%, #a89a38 68%, #6a9c30 69%, #a89a38 71%, #b09c38 79%, #303030 80%, #242424);
  font: 12px "Open Sans", sans-serif;
}
.poptitle button {
  align-self: flex-start;
  width: 48px;
  height: 18px;
  margin-left: auto;
  border: 1px solid #8c8c8c;
  border-top: 0;
  border-radius: 0 0 4px 4px;
  background: #333;
}
.poptitle button svg {
  width: 10px;
  height: 9px;
  margin: auto;
}
.popbody {
  flex: 1;
  min-height: 0;
  display: flex;
  flex-direction: column;
  border: 1px solid #c8c8b8;
  background: #56cfb0;
}
.poprow {
  flex: 1;
  min-height: 0;
  display: flex;
}
.view {
  flex: 1;
  min-width: 0;
  height: 100%;
  border: 3px solid;
  border-color: #33705f #a8f0dc #a8f0dc #33705f;
  background: black;
}
.poptools {
  width: 38px;
  display: flex;
  flex-direction: column;
  gap: 2px;
  padding: 1px 2px 0;
}
.poptools button {
  height: 33px;
  display: grid;
  place-items: center;
  border: 3px solid;
  border-color: #b4f4e4 #4e8686 #4e8686 #b4f4e4;
  outline: 1px solid #103c30;
  background: #9cdcdc;
}
.poptools svg {
  width: 23px;
  height: 23px;
  border: 1px solid black;
}
.closebar {
  height: 30px;
  padding: 2px 1px 1px;
}
.closebar button {
  width: 100%;
  height: 27px;
  border: 2px solid;
  border-color: #d4f8f8 #4e8686 #4e8686 #d4f8f8;
  background: #9cdcdc;
  font-size: 15px;
}

/* tool buttons */
.tools {
  min-height: 0;
  display: flex;
  flex-direction: column;
  padding: 2px 0 0 1px;
  background: #2c7a68;
}
.grid {
  display: grid;
  grid-template-columns: repeat(4, 38px);
  grid-auto-rows: 38px;
  gap: 2px;
  padding: 1px;
  width: 160px;
  margin-left: 1px;
  background: black;
}
.grid.teal {
  margin-bottom: 4px;
  box-shadow: 0 2px #9cdcdc;
}
.grid button {
  display: grid;
  place-items: center;
  border: 3px solid;
  border-color: #ccf4f4 #5a9292 #5a9292 #ccf4f4;
  background: #9cdcdc;
}
.grid svg {
  width: 30px;
  height: 30px;
  border: 1px solid black;
}
.grid .stop {
  background: #b82020;
}
.grid .stop svg {
  background: #9cdcdc;
  border-color: #600;
}
.grid.gray button {
  border-color: #f0f0f0 #868686 #868686 #f0f0f0;
  background: #ccc;
}
.grid.gray .lit {
  background: white;
}
.grid.gray .pick {
  border-color: #ffe8a8 #a88030 #a88030 #ffe8a8;
  background: #ffc84f;
}
.overview {
  flex: 1;
  min-height: 0;
  margin-top: 3px;
  border: solid #a8f0dc;
  border-width: 0 2px 2px 0;
  background: black;
}
.overview svg {
  width: 100%;
  height: 100%;
}
.coords {
  height: 44px;
  padding: 7px 0 0 3px;
  border: 2px solid;
  border-color: #2c7a68 #a8f0dc #a8f0dc #2c7a68;
  background: #56cfb0;
  font-size: 15px;
  line-height: 15px;
}

/* command line */
.command {
  height: 36px;
  display: flex;
  gap: 1px;
  padding: 2px 1px 1px 0;
  background: black;
}
.command > * {
  background: #ffffce;
}
.command > button {
  display: grid;
  place-items: center;
}
.command button svg {
  width: 21px;
  height: 21px;
  border: 1px solid black;
}
.flat {
  width: 31px;
  border: 2px solid #ffffce;
  box-shadow: inset 0 0 0 1px #a8a88c;
}
.flat:first-child {
  width: 25px;
  padding-right: 7px;
}
.snap {
  width: 29px;
  border: 3px solid #56b89c;
  box-shadow: inset 0 0 0 2px #d8d0a8;
}
.command label {
  width: 47px;
  padding-left: 2px;
  line-height: 34px;
}
.entry {
  width: 171px;
  padding: 2px;
}
.entry input {
  width: 100%;
  height: 28px;
  padding: 0 4px;
  border: 2px solid;
  border-color: #96967e #c4c4a0 #c4c4a0 #96967e;
  background: repeating-linear-gradient(black 0 1px, #ffffce 1px 2px) 4px 1px / 1px 15px no-repeat #ffffce;
  font: inherit;
}
.message {
  flex: 1;
  padding-left: 5px;
  line-height: 34px;
}
.command .units {
  width: 78px;
  display: flex;
  align-items: center;
  position: relative;
  padding: 2px 3px 2px 6px;
  background: #56cfb0;
}
.units select {
  appearance: none;
  width: 100%;
  height: 28px;
  padding-left: 4px;
  border: 2px solid;
  border-color: #a8f0dc #2c7a68 #2c7a68 #a8f0dc;
  border-radius: 0;
  background: #56cfb0;
  font: bold 15px "Liberation Mono", monospace;
}
.units i {
  position: absolute;
  right: 11px;
  width: 12px;
  height: 8px;
  border: 2px solid;
  border-color: #a8f0dc #2c7a68 #2c7a68 #a8f0dc;
  pointer-events: none;
}
.status {
  height: 31px;
  padding: 2px 2px 3px 0;
  border-top: 3px solid #6c8c8c;
  border-bottom: 2px solid #0a2020;
  background: #d8ffff;
}
.status p {
  height: 21px;
  padding-right: 6px;
  border-bottom: 2px solid #5c9090;
  border-right: 2px solid #5c9090;
  background: #b3ffff;
  line-height: 21px;
  text-align: center;
}
.langbar {
  position: absolute;
  right: 100px;
  bottom: 50px;
  width: 79px;
  height: 25px;
  background: linear-gradient(#8a8a8a, #909494 40%, #3c4c4c 45%, #4c5c5c);
}
.langbar text {
  font: bold 13px "Liberation Sans", sans-serif;
  fill: white;
  text-anchor: middle;
}

/* task bar */
.taskbar {
  height: 40px;
  flex: none;
  display: flex;
  gap: 4px;
  padding-top: 1px;
  border-top: 1px solid #3c5878;
  background: linear-gradient(#2c4a74, #0c2850 30%, #123460);
}
.start {
  width: 56px;
  padding-left: 7px;
  background: #081a38;
}
.start svg {
  width: 38px;
  height: 38px;
}
.task {
  width: 58px;
  display: grid;
  place-items: center;
  border: 1px solid #8296b2;
  border-radius: 3px;
  background: linear-gradient(160deg, #8c9cb4, #50688e 35%, #24426e 55%, #1f4274);
}
.task svg {
  width: 34px;
  height: 32px;
}
.task.many {
  width: 51px;
  margin-right: 7px;
  box-shadow: 3px 0 #1a3158, 4px 0 #7488a8, 6px 0 #1a3158, 7px 0 #5c7090;
}
.task.active {
  background: linear-gradient(160deg, #d4dae4, #a8b4c8 50%, #8c9cb8);
}
.sixty {
  font: bold 9px "Liberation Sans", sans-serif;
}
.tray {
  margin-left: auto;
  display: flex;
  align-items: center;
  color: white;
  font: 12px "Open Sans", sans-serif;
}
.tray svg {
  width: 90px;
  height: 24px;
}
.time {
  width: 80px;
  text-align: center;
  line-height: 18px;
}
.desktop {
  align-self: stretch;
  width: 14px;
  border: 1px solid #6c84a8;
  background: #28446c;
}
```
